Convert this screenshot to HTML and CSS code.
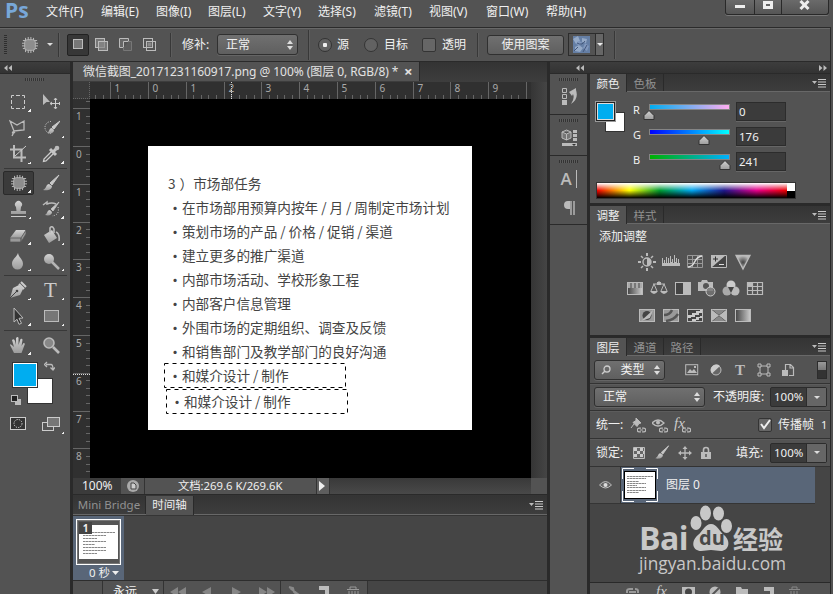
FILE: index.html
```html
<!DOCTYPE html>
<html lang="zh-CN">
<head>
<meta charset="utf-8">
<title>Photoshop</title>
<link rel="stylesheet" href="styles.css">
</head>
<body>
<svg width="0" height="0" class="defs"><defs>
<linearGradient id="g" x1="0" y1="0" x2="0" y2="1"><stop offset="0" stop-color="#d4d4d4"/><stop offset="1" stop-color="#9c9c9c"/></linearGradient>
<linearGradient id="h"><stop offset="0" stop-color="#444"/><stop offset="1" stop-color="#ccc"/></linearGradient>
<radialGradient id="r"><stop offset="0" stop-color="#444"/><stop offset="1" stop-color="#bbb"/></radialGradient>
<symbol id="patch" viewBox="0 0 18 18"><path d="M4 1v16M7 0v18M10 0v18M13 1v16M1 4h16M0 7h18M0 10h18M1 13h16" stroke="#c8c8c8" fill="none"/><rect x="3" y="3" width="12" height="12" rx="3" fill="#8d8d8d" stroke="#b8b8b8"/></symbol>
<symbol id="brush" viewBox="0 0 18 18"><path d="M17 1L8 9l2 2z" fill="#c8c8c8" stroke="#c8c8c8"/><path d="M7 10c-3 0-2 4-6 6 4 1 9 0 9-4z" fill="url(#g)"/></symbol>
<symbol id="menu" viewBox="0 0 15 9"><path d="M0 2h5L2.500 5z" fill="#bbb"/><path d="M6 .5h8M6 3h8M6 5.500h8M6 8h8" stroke="#c8c8c8"/></symbol>
<symbol id="ud" viewBox="0 0 6 10"><path d="M0 4l3-4 3 4zM0 6h6l-3 4z" fill="#ddd"/></symbol>
<symbol id="link" viewBox="0 0 8 5"><path d="M3.500.8H2a1.700 1.700 0 000 3.400h1.500M4.500.8H6a1.700 1.700 0 010 3.400H4.500M2.500 2.500h3" fill="none" stroke="#bbb" stroke-width="1.100"/></symbol>
</defs></svg>
<div class="app">
<header class="menubar">
  <div class="logo">Ps</div>
  <nav class="menus"><span>文件(F)</span><span>编辑(E)</span><span>图像(I)</span><span>图层(L)</span><span>文字(Y)</span><span>选择(S)</span><span>滤镜(T)</span><span>视图(V)</span><span>窗口(W)</span><span>帮助(H)</span></nav>
  <div class="winbtns">
    <i><svg width="12" height="14"><path d="M1 6.500h10" stroke="#eee" stroke-width="3"/></svg></i>
    <i><svg width="12" height="14"><path d="M2.500 2.500h7v5h-7z" stroke="#eee" stroke-width="3" fill="none"/></svg></i>
    <i><svg width="12" height="14"><path d="M1.500 1l8 8M9.500 1l-8 8" stroke="#eee" stroke-width="3"/></svg></i>
  </div>
</header>
<div class="options">
  <i class="vgrip"></i>
  <svg class="o-patch" width="18" height="18"><use href="#patch" x="1" y="1" width="16" height="16"/></svg>
  <svg class="o-arr" width="6" height="3"><path d="M0 0h6L3 3z" fill="#ddd"/></svg>
  <i class="sep"></i>
  <div class="modes">
    <i class="on"><svg width="14" height="14"><rect x="2.500" y="1.500" width="9" height="9" fill="#777" stroke="#bbb"/></svg></i>
    <i><svg width="14" height="14"><rect x=".5" y=".5" width="9" height="9" fill="#777" stroke="#bbb"/><rect x="3.500" y="3.500" width="9" height="9" fill="#888" fill-opacity=".7" stroke="#bbb"/></svg></i>
    <i><svg width="14" height="14"><path d="M4.500 9.500H.5v-9h9v3h-5z" fill="#666" stroke="#bbb"/><path d="M9.500 3.500h3v9h-8v-3" fill="#5c5c5c" stroke="#777"/></svg></i>
    <i><svg width="14" height="14"><rect x="4.500" y="4.500" width="4" height="4" fill="#888"/><rect x=".5" y=".5" width="9" height="9" fill="none" stroke="#bbb"/><rect x="3.500" y="3.500" width="9" height="9" fill="none" stroke="#bbb"/></svg></i>
  </div>
  <i class="sep s2"></i>
  <span class="lab o-fix">修补:</span>
  <div class="select o-sel"><span>正常</span><svg width="6" height="10"><use href="#ud"/></svg></div>
  <i class="sep s3"></i>
  <i class="radio on"></i><span class="lab l1">源</span>
  <i class="radio"></i><span class="lab l2">目标</span>
  <i class="check"></i><span class="lab l3">透明</span>
  <i class="sep s4"></i>
  <div class="button">使用图案</div>
  <div class="pattern"><svg width="17" height="17"><rect width="17" height="17" fill="#657fa5"/><path d="M0 3l5-3 2 5-4 3zM9 2l5 1-1 4-4-1zM2 11l4-2 4 3-3 4-5-1z" fill="#94a9c6"/><path d="M5 5l4 1-2 4-4-2zM12 7l4 3-2 5-4-3z" fill="#8198bd"/><path d="M4 7q5 3 8-2M1 15l4-4M10 16l4-7" stroke="#43577a" fill="none"/></svg><b><svg width="6" height="3"><path d="M0 0h6L3 3z" fill="#eee"/></svg></b></div>
  <i class="sep s5"></i>
</div>
<main class="work">
  <aside class="tools">
    <div class="darkbar"><svg width="8" height="6"><path d="M3.500 0v6L0 3zM8 0v6L4.500 3z" fill="#bbb"/></svg></div>
    <i class="grip"></i>
    <div class="toolgrid">
      <i class="t c"><svg width="18" height="18"><path d="M2.500 5V2.500H5M7 2.500h4M13 2.500h2.500V5M15.500 7v4M15.500 13v2.500H13M11 15.500H7M5 15.500H2.500V13M2.500 11V7" stroke="#ccc" fill="none"/></svg></i>
      <i class="t"><svg width="18" height="18"><path d="M1 1l7 8H4.500L1 12z" fill="#bbb"/><path d="M13.500 5.500v10M8.500 10.500h10M12 7l1.500-2L15 7M12 14l1.500 2 1.500-2M10 9l-2 1.500 2 1.500M17 9l1.500 1.500L17 12" fill="none" stroke="#ccc"/></svg></i>
      <i class="t c"><svg width="18" height="18"><path d="M1 2l7 4 7-4v9L5 12zM5 12c-3 2-1 3 1 1M5 13l-2 4" fill="none" stroke="#bbb" stroke-width="1.300"/></svg></i>
      <i class="t c"><svg width="18" height="18"><path d="M9 2.500a6 6 0 100 12" fill="none" stroke="#ddd" stroke-dasharray="1 1.500"/><path d="M18 2l-8 6 2 2z" fill="#ccc" stroke="#ccc"/><path d="M10 9c-3 0-2 3-5 5 4 1 7 0 7-3z" fill="url(#g)"/></svg></i>
      <i class="t c"><svg width="18" height="18"><path d="M5 0v12.500h12M1 4.500h11.500V17" fill="none" stroke="#bbb" stroke-width="2"/><path d="M6 11L17 1" stroke="#ccc"/></svg></i>
      <i class="t c"><svg width="18" height="18"><path d="M10 6L2 14l-.5 2.500L4 16l8-8" fill="none" stroke="#ccc" stroke-width="1.300"/><path d="M8 4l6 6M11 7l4-4" stroke="#c4c4c4" stroke-width="3"/><circle cx="15" cy="3" r="2.300" fill="#bbb"/></svg></i>
      <hr>
      <i class="t c on"><svg width="18" height="18"><use href="#patch" x="1" y="1" width="16" height="16"/></svg></i>
      <i class="t c"><svg width="18" height="18"><use href="#brush"/></svg></i>
      <i class="t c"><svg width="18" height="18"><path d="M7 7a3.500 3.500 0 115 0l-.5 4H17v3H2v-3h5.500z" fill="url(#g)"/><path d="M2 16.500h15" stroke="#ccc"/></svg></i>
      <i class="t c"><svg width="18" height="18"><path d="M1 5l4-3v2c5-2 7-1 9 0" fill="none" stroke="#bbb" stroke-width="1.500"/><path d="M17 2l-8 7 2 2z" fill="#ccc" stroke="#bbb"/><path d="M8 10c-3 0-2 3-5 5 4 1 7 0 7-3z" fill="url(#g)"/><path d="M16 7q2 8-6 9" fill="none" stroke="#ddd" stroke-dasharray="1 1.500"/></svg></i>
      <i class="t c"><svg width="18" height="18"><path d="M1 12l6-8h10l-5 8z" fill="url(#g)"/><path d="M1 12h11v4H1zM12 12l5-8v4l-5 8z" fill="#999" stroke="#555" stroke-width=".7"/></svg></i>
      <i class="t c"><svg width="18" height="18"><path d="M2 9l8-5 5 8-8 5z" fill="url(#g)"/><path d="M8 7V2q2-3 4 1v4M14 6q4 2 3 9" fill="none" stroke="#bbb" stroke-width="1.600"/></svg></i>
      <i class="t c"><svg width="18" height="18"><path d="M9 1c1 5 5 6 5 11a5 5 0 01-11 0c0-5 4-6 6-11z" fill="url(#g)"/></svg></i>
      <i class="t c"><svg width="18" height="18"><circle cx="7" cy="7" r="5" fill="url(#g)"/><path d="M10 10l7 7" stroke="#b4b4b4" stroke-width="2.500"/></svg></i>
      <hr>
      <i class="t c"><svg width="18" height="18"><path d="M1 17L4 7l6-3 4 4-3 6z" fill="url(#g)"/><path d="M10 3l5 5M12 1l5 5" stroke="#ccc" stroke-width="2"/><path d="M1 17l6-6" stroke="#444"/><circle cx="8" cy="10" r="1.300" fill="#444"/></svg></i>
      <i class="t c serif">T</i>
      <i class="t c"><svg width="18" height="18"><path d="M5 1l9 10-4 .3 2.500 5-2.500 1-2-5L5 15z" fill="#333" stroke="#bbb"/></svg></i>
      <i class="t c"><svg width="18" height="18"><rect x="2.500" y="3.500" width="14" height="11" fill="#777" stroke="#bbb"/></svg></i>
      <hr>
      <i class="t c"><svg width="18" height="18"><path d="M5 17L1 9q0-2 4 2L3 4q2-2 3 1l1 4V2q2-2 2.500 0v7l2-6q2-1 2 1l-1 6 2-3q2 0 1 2l-3 8z" fill="url(#g)"/></svg></i>
      <i class="t"><svg width="18" height="18"><circle cx="7" cy="7" r="5" fill="#888" stroke="#bbb" stroke-width="1.600"/><path d="M11 11l6 6" stroke="#bbb" stroke-width="2.600"/></svg></i>
    </div>
    <div class="swatches">
      <i class="bg"></i><i class="fg"></i>
      <svg class="swap" width="11" height="10"><path d="M2 3.500h5q2 0 2 5M3 1L.5 3.500 3 6M6.500 6.500L9 9l2-2.500" fill="none" stroke="#bbb" stroke-width="1.300"/></svg>
      <svg class="reset" width="11" height="11"><rect x="4" y="4" width="6" height="6" fill="#bbb"/><rect x=".5" y=".5" width="6" height="6" fill="#222" stroke="#bbb"/></svg>
    </div>
    <div class="toolgrid last">
      <i class="t"><svg width="18" height="18"><rect x="1.500" y="2.500" width="15" height="12" fill="#333" stroke="#ccc"/><circle cx="9" cy="8.500" r="4" fill="none" stroke="#ddd" stroke-dasharray="1.200 1.200"/></svg></i>
      <i class="t c"><svg width="18" height="18"><rect x=".5" y="7.500" width="11" height="8" fill="#555" stroke="#ccc"/><rect x="5.500" y="2.500" width="12" height="9" fill="#777" stroke="#ccc"/></svg></i>
    </div>
  </aside>
  <section class="doc">
    <div class="doctabs"><div class="doctab"><span>微信截图_20171231160917.png @ 100% (图层 0, RGB/8) *</span><b>×</b></div></div>
    <div class="ruler-row"><i class="corner"></i><svg id="rulerX" width="441" height="17"></svg><i class="vs"></i></div>
    <div class="stage">
      <svg id="rulerY" width="17" height="379"></svg>
      <div class="canvas">
        <article class="paper">
          <p class="first">3<em></em>）市场部任务</p>
          <p><b>·</b>在市场部用预算内按年 / 月 / 周制定市场计划</p>
          <p><b>·</b>策划市场的产品 / 价格 / 促销 / 渠道</p>
          <p><b>·</b>建立更多的推广渠道</p>
          <p><b>·</b>内部市场活动、学校形象工程</p>
          <p><b>·</b>内部客户信息管理</p>
          <p><b>·</b>外围市场的定期组织、调查及反馈</p>
          <p><b>·</b>和销售部门及教学部门的良好沟通</p>
          <p><b>·</b>和媒介设计 / 制作</p>
          <p class="copy"><b>·</b>和媒介设计 / 制作</p>
          <svg class="ants" width="324" height="284"><path d="M16.500 217.500h181v24h-181zM18.500 243.500h181v24h-181z" fill="none" stroke="#000" stroke-dasharray="4 4"/></svg>
        </article>
      </div>
      <i class="vs"></i>
    </div>
    <div class="status"><span class="zoomv">100%</span><i class="sicon"><svg width="12" height="12"><circle cx="6" cy="6" r="6" fill="#aaa"/><path d="M4 3h3l2 2v4H4z" fill="#ccc" stroke="#444"/></svg></i><span class="size">文档:269.6 K/269.6K</span><i class="play"><svg width="6" height="10"><path d="M0 0v10l6-5z" fill="#eee"/></svg></i><i class="hs"></i><i class="hc"></i></div>
    <div class="tabs tl"><span class="tab off">Mini Bridge</span><span class="tab on">时间轴</span><svg width="15" height="9"><use href="#menu"/></svg></div>
    <div class="timeline"><div class="frame"><div class="fthumb"><b>1</b><div class="page"><i></i><i></i><i></i><i></i><i></i><i></i><i></i><i></i></div></div><div class="ftime">0 秒<svg width="7" height="4"><path d="M0 0h7L3.500 4z" fill="#eee"/></svg></div></div></div>
    <div class="tlfoot"><i class="blank"></i><div class="loop"><span>永远</span><svg width="7" height="5"><path d="M0 0h7L3.500 5z" fill="#ccc"/></svg></div>
      <div class="ctl"><svg width="116" height="14"><path d="M14 6v10l-8-5zM22 6v10l-8-5zM47 6v10l-9-5zM68 6v10l9-5zM95 6v10l8-5zM103 6v10l8-5z" fill="#858585"/></svg></div>
      <div class="ctl2"><svg width="86" height="14"><path d="M8 6l4 1 1 4 6 5M9 7l9 7" stroke="#888" stroke-width="2" fill="none"/><path d="M38 5h10v9h-4v-5h-6z" fill="#bbb"/><path d="M66 8.500h12M69 8V6h6v2M68 10v5M71 10v5M74 10v5M77 10v5" fill="none" stroke="#999"/></svg></div></div>
  </section>
  <section class="right">
    <div class="darkbar two"><svg width="8" height="6"><path d="M3.500 0v6L0 3zM8 0v6L4.500 3z" fill="#bbb"/></svg><svg width="8" height="6"><path d="M0 0v6l3.500-3zM4.500 0v6L8 3z" fill="#bbb"/></svg></div>
    <div class="rbody">
      <div class="strip">
        <div class="sg"><i class="grip"></i><svg width="16" height="20"><path d="M1.500 1.500h4v4h-4zM1.500 7.500h4v4h-4z" fill="none" stroke="#bbb"/><path d="M1 13h5v5H1z" fill="#bbb"/><path d="M8 5l7-4v2q3 9-5 14 4-6 2-10l-1 2z" fill="#bbb"/></svg></div>
        <div class="sg"><i class="grip"></i><svg width="16" height="20"><path d="M1 4l4.500-2L10 4v6l-4.500 2L1 10zM1 4l4.500 2L10 4M5.500 6v6" fill="#777" stroke="#bbb"/><path d="M12 2h4v3h-4zM12 6h4v3h-4zM12 10h4v3h-4zM1 15h15v3H1z" fill="#bbb"/><path d="M11 16h4l-2 2z" fill="#333"/></svg></div>
        <div class="sg tall"><i class="grip"></i><div class="ach">A</div><svg width="12" height="16"><path d="M11 1H5a4 4 0 000 8h2V1" fill="#bbb"/><path d="M8 1v14M11 1v14" stroke="#bbb" stroke-width="1.400"/></svg></div>
      </div>
      <div class="panels">
        <div class="panel color">
          <div class="tabs"><span class="tab on">颜色</span><span class="tab">色板</span><svg width="15" height="9"><use href="#menu"/></svg></div>
          <div class="cbody">
            <div class="sw"><i class="b"></i><i class="f"></i></div>
            <div class="sliders">
              <div><span>R</span><i class="tr r"></i><svg class="th p0" width="12" height="10"><path d="M6 .5l5 5v4H1v-4z" fill="url(#g)" stroke="#333"/></svg><b>0</b></div>
              <div><span>G</span><i class="tr g"></i><svg class="th p1" width="12" height="10"><path d="M6 .5l5 5v4H1v-4z" fill="url(#g)" stroke="#333"/></svg><b>176</b></div>
              <div><span>B</span><i class="tr bl"></i><svg class="th p2" width="12" height="10"><path d="M6 .5l5 5v4H1v-4z" fill="url(#g)" stroke="#333"/></svg><b>241</b></div>
            </div>
            <div class="spectrum"><i></i><b></b></div>
          </div>
        </div>
        <div class="panel adj">
          <div class="tabs"><span class="tab on">调整</span><span class="tab">样式</span><svg width="15" height="9"><use href="#menu"/></svg></div>
          <p>添加调整</p>
          <div class="arow">
            <svg viewBox="0 0 18 18"><circle cx="9" cy="9" r="4" fill="#555" stroke="#bbb" stroke-width="1.400"/><path d="M9 5a4 4 0 010 8zM8 0h2v3H8zM8 15h2v3H8zM0 8h3v2H0zM15 8h3v2h-3z" fill="#bbb"/><path d="M3 3l2 2M15 3l-2 2M3 15l2-2M15 15l-2-2" stroke="#bbb" stroke-width="1.500"/></svg>
            <svg viewBox="0 0 18 18"><path d="M0 13V5h1v5h1V7h1v3h1V4h1v6h1V5h1v5h1V3h1v6h1V6h1v4h1V2h1v7h1V5h1v5h1V6h1v4h1V5h0v8z" fill="#bbb"/></svg>
            <svg viewBox="0 0 18 18"><path d="M1.500 2.500h15v12h-15zM6.500 2v12M11.500 2v12M1 6.500h15M1 10.500h15" stroke="#999" fill="none"/><path d="M2 14c8 0 5-10 14-11" stroke="#ddd" fill="none" stroke-width="1.500"/></svg>
            <svg viewBox="0 0 18 18"><path d="M1.500 2.500h15v12h-15z" fill="#444" stroke="#bbb"/><path d="M1 15V2h15z" fill="#bbb"/><path d="M3 6h5M5.500 3.500v5" stroke="#333"/><path d="M9 11.500h5" stroke="#ddd"/></svg>
            <svg viewBox="0 0 18 18"><path d="M2 2.500h14L9 16z" fill="url(#r)" stroke="#bbb" stroke-width="1.300"/></svg>
          </div>
          <div class="arow">
            <svg viewBox="0 0 18 18"><rect x="1.500" y="2.500" width="15" height="12" fill="url(#h)" stroke="#bbb"/><path d="M2 3h14v5H2z" fill="#aaa"/><path d="M5 3v5M9 3v5M13 3v5" stroke="#777" stroke-width="2"/></svg>
            <svg viewBox="0 0 18 18"><path d="M3 4h12M9 1v4M4 4l-3 7M4 4l3 7M14 4l-3 7M14 4l3 7" stroke="#bbb" fill="none"/><path d="M0 11h8q-4 6-8 0zM10 11h8q-4 6-8 0zM7 2h4v3H7z" fill="#bbb"/></svg>
            <svg viewBox="0 0 18 18"><rect x="1.500" y="2.500" width="15" height="12" fill="#444" stroke="#bbb"/><path d="M9 2h8v13H9z" fill="#bbb"/></svg>
            <svg viewBox="0 0 18 18"><path d="M0 2h3l1-2h5l1 2h5v9H0z" fill="#bbb"/><circle cx="8" cy="6" r="3" fill="#555"/><circle cx="12.500" cy="11.500" r="4.500" fill="#777" fill-opacity=".8" stroke="#ccc"/></svg>
            <svg viewBox="0 0 18 18"><circle cx="9" cy="5" r="4.500" fill="#ccc"/><circle cx="5" cy="11" r="4.500" fill="#aaa"/><circle cx="13" cy="11" r="4.500" fill="#bbb"/><path d="M6 7l6 0-3 6z" fill="#444"/></svg>
            <svg viewBox="0 0 18 18"><path d="M1.500 2.500h15v12h-15zM6.500 2v13M11.500 2v13M1 6.500h15M1 10.500h15" stroke="#bbb" fill="#555" stroke-width="1.200"/><path d="M2 3h4v3H2z" fill="#bbb"/></svg>
          </div>
          <div class="arow">
            <svg viewBox="0 0 18 18"><rect x="1.500" y="2.500" width="15" height="12" fill="#999" stroke="#bbb"/><circle cx="9" cy="8.500" r="4.500" fill="#444"/><path d="M3 14L15 3l-3 8z" fill="#bbb"/></svg>
            <svg viewBox="0 0 18 18"><rect x="1.500" y="2.500" width="15" height="12" fill="#999" stroke="#bbb"/><path d="M2 8q6 0 8-5M4 14q8-1 12-7" stroke="#555" stroke-width="2.500" fill="none"/></svg>
            <svg viewBox="0 0 18 18"><rect x="1.500" y="2.500" width="15" height="12" fill="#444" stroke="#bbb"/><path d="M2 8h4V6h4V4h4V3h2v3h-3v2H9v2H5v1H2zM6 14v-2h4v-2h4V9h2v2h-3v2h-3v1z" fill="#ccc"/></svg>
            <svg viewBox="0 0 18 18"><rect x="1.500" y="2.500" width="15" height="12" fill="#666" stroke="#bbb"/><path d="M2 3l7 5.500L16 3M2 14l7-5.500 7 5.500" fill="#888" stroke="#444"/><path d="M2 3l7 5.500L2 14zM16 3L9 8.500l7 5.500z" fill="#bbb"/></svg>
            <svg viewBox="0 0 18 18"><rect x="1.500" y="2.500" width="15" height="12" fill="url(#h)" stroke="#bbb"/></svg>
          </div>
        </div>
        <div class="panel layers">
          <div class="tabs"><span class="tab on">图层</span><span class="tab">通道</span><span class="tab">路径</span><svg width="15" height="9"><use href="#menu"/></svg></div>
          <div class="lrow r1">
            <div class="select kind"><svg width="10" height="10"><circle cx="6" cy="4" r="3" fill="none" stroke="#ccc" stroke-width="1.300"/><path d="M4 6L1 9" stroke="#ccc" stroke-width="1.500"/></svg><span>类型</span><svg width="6" height="10"><use href="#ud"/></svg></div>
            <div class="filters">
              <svg viewBox="0 0 14 14"><rect x=".7" y="1.700" width="12" height="10" fill="#555" stroke="#bbb"/><path d="M2 10l3-4 2 2 2-2 3 4zM9 3h2v2H9z" fill="#bbb"/></svg>
              <svg viewBox="0 0 14 14"><circle cx="7" cy="7" r="5" fill="#666" stroke="#bbb"/><path d="M11 3A5.500 5.500 0 003 10.500z" fill="#ccc"/></svg>
              <em>T</em>
              <svg viewBox="0 0 14 14"><path d="M3 3h8v8H3z" fill="none" stroke="#bbb"/><path d="M1 1h3v3H1zM10 1h3v3h-3zM1 10h3v3H1zM10 10h3v3h-3z" fill="#555" stroke="#bbb"/></svg>
              <svg viewBox="0 0 14 14"><path d="M4.500 7V1.500h5l3 3v8H8M9 1v4h4" fill="none" stroke="#bbb" stroke-width="1.200"/><path d="M1 7h6v6H1z" fill="#bbb"/></svg>
            </div>
            <i class="switch"></i>
          </div>
          <div class="lrow r2"><div class="select blend"><span>正常</span><svg width="6" height="10"><use href="#ud"/></svg></div><span class="pl">不透明度:</span><div class="num"><span>100%</span><b><svg width="6" height="3"><path d="M0 0h6L3 3z" fill="#ddd"/></svg></b></div></div>
          <div class="lrow r3"><span class="rl">统一:</span>
            <svg width="17" height="16"><path d="M6 1l5 5-2 .5-2 3-4-4 3-2zM4 7l-3 4" fill="#bbb" stroke="#bbb"/><use href="#link" x="7" y="10" width="9" height="6"/></svg>
            <svg width="17" height="16"><path d="M0 6q6-6 12 0-6 6-12 0z" fill="none" stroke="#bbb" stroke-width="1.300"/><circle cx="6" cy="5.500" r="2" fill="#bbb"/><use href="#link" x="7" y="10" width="9" height="6"/></svg>
            <svg width="17" height="16"><text x="0" y="11" class="fx">fx</text><use href="#link" x="8" y="10" width="9" height="6"/></svg>
            <i class="check on"><svg width="13" height="12"><path d="M2 5l3 4 6-8" fill="none" stroke="#eee" stroke-width="2"/></svg></i><span class="prop">传播帧</span><span class="one">1</span></div>
          <div class="lrow r4"><span class="rl">锁定:</span>
            <svg width="14" height="14"><path d="M1.500 1.500h11v11h-11z" fill="#666" stroke="#bbb"/><path d="M2 2h3v3H2zM8 2h3v3H8zM5 5h3v3H5zM11 5h1v3h-1zM2 8h3v3H2zM8 8h3v3H8z" fill="#ccc"/></svg>
            <svg width="16" height="15"><use href="#brush"/></svg>
            <svg width="14" height="14"><path d="M7 2v10M2 7h10" stroke="#bbb" stroke-width="1.300"/><path d="M7 0l2.500 3h-5zM7 14l2.500-3h-5zM0 7l3-2.500v5zM14 7l-3-2.500v5z" fill="#bbb"/></svg>
            <svg width="12" height="14"><path d="M3.500 7V4a2.500 2.500 0 015 0v3" fill="none" stroke="#bbb" stroke-width="1.600"/><path d="M1 6h10v7H1z" fill="#bbb"/><path d="M6 8v3" stroke="#555" stroke-width="1.500"/></svg>
            <span class="pl">填充:</span><div class="num"><span>100%</span><b><svg width="6" height="3"><path d="M0 0h6L3 3z" fill="#ddd"/></svg></b></div></div>
          <div class="list">
            <div class="layer"><i class="eye"><svg width="13" height="10"><path d="M.5 5q6-7 12 0-6 6-12 0z" fill="#666" stroke="#bbb"/><circle cx="6.500" cy="5" r="2" fill="#ddd"/></svg></i>
              <div class="lmain"><div class="lthumb"><div class="page"><i></i><i></i><i></i><i></i><i></i><i></i><i></i><i></i></div><svg width="36" height="34"><path d="M.5 11V.5H12M24 .5h11.500V11M35.500 23v10.500H24M12 33.500H.5V23" fill="none" stroke="#fff"/></svg></div><span>图层 0</span></div></div>
            <div class="mark"><div class="mline"><span class="bai">Bai</span><div class="paw"><svg width="44" height="48"><g fill="#c8c8c8"><ellipse cx="7" cy="18" rx="5.500" ry="7"/><ellipse cx="16.500" cy="8" rx="5.500" ry="7.500"/><ellipse cx="29.500" cy="8.500" rx="5.500" ry="7"/><ellipse cx="37.500" cy="21" rx="5.500" ry="7"/><path d="M22 19c6 0 8 7 13 11 8 7 4 16-3 16-4 0-6-1-10-1s-6 1-10 1c-8 0-11-9-3-16 5-4 7-11 13-11z"/></g></svg><b>du</b></div><span class="jy">经验</span></div><div class="url">jingyan.baidu.com</div></div>
          </div>
          <div class="lfoot"><svg width="180" height="11"><g fill="none" stroke="#999" stroke-width="2"><path d="M7 10V8q0-2 3-2h3M18 10V8q0-2-3-2M9 9h7"/></g><text x="36" y="13" class="fx">fx</text><path d="M62 4h13v7H62z" fill="#bbb"/><circle cx="68.500" cy="9" r="3.500" fill="#444"/><circle cx="95" cy="9" r="5.500" fill="#bbb"/><path d="M99 5l-7 7" stroke="#555" stroke-width="2"/><path d="M116 4h5l1 2h6v5h-12z" fill="#bbb"/><path d="M144 4h10v7h-4V8h-6z" fill="#bbb"/><path d="M169 6.500h11M172 6V4h5v2M171 8v4M174 8v4M177 8v4" stroke="#888" fill="none"/></svg></div>
        </div>
      </div>
    </div>
  </section>
</main>
</div>
<script src="rulers.js"></script>
</body>
</html>
```
FILE: styles.css
```css
* { box-sizing: border-box; }
body { margin: 0; overflow: hidden; background: #535353; font: 12px/16px "Noto Sans", "Noto Sans CJK SC", sans-serif; color: #f0f0f0; }
i, em, b { font-style: normal; }
svg { display: block; flex: none; }
span, p { white-space: nowrap; }
.defs { position: absolute; }
.app { width: 833px; height: 594px; display: flex; flex-direction: column; overflow: hidden; }
.menubar { height: 27px; display: flex; flex: none; }
.logo { width: 46px; padding-left: 5px; font: bold 21px/21px "Open Sans", sans-serif; color: #78a7d8; }
.menus { display: grid; grid-template-columns: 55px 55px 52px 55px 55px 56px 55px 57px 60px 60px; line-height: 24px; width: 679px; flex: none; }
.winbtns { width: 104px; height: 15px; display: grid; grid-template-columns: 28px 27px 1fr; border: 1px solid #292929; border-top: 0; border-radius: 0 0 3px 3px; background: linear-gradient(#6a6a6a, #555); box-shadow: 0 1px #777; }
.winbtns i { display: flex; justify-content: center; border-left: 1px solid #292929; }
.winbtns i:first-child { border: 0; }
.options { height: 34px; flex: none; width: 831px; display: flex; align-items: center; border-top: 1px solid #2b2b2b; border-right: 1px solid #2b2b2b; box-shadow: inset 0 1px #686868; }
.vgrip { width: 3px; height: 20px; margin: 0 14px 0 4px; background: repeating-linear-gradient(#2e2e2e 0 1px, #555 1px 2px); }
.o-arr { margin: 0 5px 0 8px; }
.sep { width: 2px; height: 24px; margin-right: 7px; border-left: 1px solid #383838; border-right: 1px solid #5d5d5d; }
.modes { display: flex; width: 96px; }
.modes i { width: 24px; height: 22px; display: flex; align-items: center; justify-content: center; flex: none; }
.modes .on { width: 22px; margin-right: 1px; background: #373737; border: 1px solid #222; border-radius: 2px; }
.s2 { margin: 0 10px 0 7px; }
.lab { flex: none; }
.o-fix { width: 35px; }
.select { display: flex; align-items: center; justify-content: space-between; border: 1px solid #303030; border-radius: 3px; background: linear-gradient(#707070, #5f5f5f); box-shadow: 0 1px #656565; flex: none; }
.o-sel { width: 81px; height: 21px; padding: 0 4px 0 8px; }
.s3 { height: 30px; margin: 0 8px 0 10px; }
.radio { width: 14px; height: 14px; border-radius: 50%; border: 1px solid #343434; background: #626262; flex: none; }
.radio.on { background: radial-gradient(#eee 0 2px, #626262 2.500px); }
.l1 { width: 27px; padding-left: 5px; }
.l1 + .radio { margin-left: 5px; }
.l2 { width: 37px; padding-left: 6px; margin-right: 1px; }
.check { width: 14px; height: 14px; border: 1px solid #343434; border-radius: 2px; background: #666; flex: none; }
.l2 + .check { margin-left: 6px; }
.l3 { width: 36px; padding-left: 6px; margin-right: 5px; }
.s4 { margin-right: 8px; }
.button { width: 77px; height: 20px; line-height: 18px; text-align: center; border: 1px solid #303030; border-radius: 3px; background: linear-gradient(#707070, #5f5f5f); flex: none; }
.pattern { width: 36px; height: 23px; margin: 0 10px 0 4px; display: flex; align-items: center; border: 1px solid #2c2c2c; padding-left: 4px; flex: none; }
.pattern b { width: 9px; height: 21px; margin-left: 5px; border-left: 1px solid #2c2c2c; background: #666; display: flex; align-items: center; justify-content: center; }
.s5 { height: 28px; }
.work { flex: 1; display: flex; min-height: 0; background: linear-gradient(90deg, #2a2a2a 831px, #535353 831px); padding-top: 1px; }
.darkbar { height: 12px; background: linear-gradient(#3d3d3d, #333); border-bottom: 1px solid #2a2a2a; display: flex; align-items: center; padding-left: 4px; }
.grip { display: block; height: 3px; width: 19px; background: repeating-linear-gradient(90deg, #333 0 1px, #5c5c5c 1px 2px); }
.tools { width: 70px; background: #535353; flex: none; }
.tools > .grip { margin: 4px 0 8px 25px; }
.toolgrid { display: grid; grid-template-columns: 33px 33px; padding-left: 1px; grid-template-rows: repeat(3, 26px) 3px repeat(4, 26px) 3px repeat(2, 26px) 3px 26px; }
.toolgrid hr { grid-column: 1 / 3; height: 1px; border: 0; background: #383838; margin: 1px 0 1px 3px; }
.toolgrid.last { grid-template-rows: 26px; }
.t { display: flex; align-items: center; justify-content: center; }
.t.c { background: linear-gradient(135deg, transparent 50%, #eee 50%) 27px 20px / 3px 3px no-repeat; }
.t.on { margin: 1px 0 0 2px; background-color: #3b3b3b; background-position: 24px 18px; border: 1px solid #2a2a2a; border-radius: 2px; width: 31px; height: 24px; }
.serif { font: 21px/20px "Liberation Serif", serif; color: #ccc; }
.swatches { position: relative; height: 52px; margin-top: 1px; }
.swatches > * { position: absolute; }
.swatches .fg { left: 12px; top: 3px; width: 26px; height: 26px; background: #00adf0; border: 1px solid #333; box-shadow: inset 0 0 0 1px #fff; }
.swatches .bg { left: 27px; top: 19px; width: 26px; height: 26px; background: #fff; border: 1px solid #333; }
.swap { left: 44px; top: 2px; }
.reset { left: 11px; top: 36px; }
.doc { width: 474px; margin-left: 3px; flex: none; display: flex; flex-direction: column; background: #353535; overflow: hidden; }
.doctabs { height: 20px; flex: none; background: linear-gradient(#333, #3d3d3d); }
.doctab { width: 347px; height: 19px; background: #535353; border-right: 1px solid #2a2a2a; padding-left: 10px; display: flex; line-height: 20px; font-size: 12px; color: #e2e2e2; }
.doctab span { width: 317px; letter-spacing: -.06px; }
.doctab b { font-size: 15px; margin-left: 4px; line-height: 18px; }
.ruler-row { display: flex; height: 17px; flex: none; }
.corner { width: 17px; background: #3a3a3a; border-right: 1px dotted #666; border-bottom: 1px dotted #666; }
.ruler-row svg, .stage > svg { background: #303030; }
.vs { width: 16px; background: linear-gradient(90deg, #353535, #454545); flex: none; }
.stage { display: flex; height: 379px; flex: none; }
.canvas { width: 441px; background: #000; padding: 47px 58px; }
.paper { position: relative; width: 324px; height: 284px; background: #fff; padding: 25px 0 0 20px; color: #444; font: 13.640px/24px "Noto Sans CJK SC", sans-serif; word-spacing: -.1px; }
.paper p { margin: 0; height: 24px; display: flex; }
.paper p b { width: 14px; text-align: center; flex: none; font-weight: 500; }
.paper .first em { width: 4px; }
.paper .copy { margin: 2px 0 0 2px; }
.ants { position: absolute; left: 0; top: 0; }
.status { height: 17px; flex: none; display: flex; background: #353535; border-bottom: 1px solid #2a2a2a; line-height: 15px; }
.zoomv { width: 48px; padding-left: 9px; background: #3b3b3b; }
.sicon { width: 24px; background: #535353; display: flex; align-items: center; justify-content: center; border-right: 1px solid #333; }
.size { width: 171px; background: #535353; padding-left: 33px; font-size: 11.300px; }
.play { width: 14px; background: #5e5e5e; border: 1px solid #333; border-width: 0 1px; padding: 3px 0 0 2px; }
.hs { flex: 1; background: linear-gradient(#393939, #494949); }
.hc { width: 16px; background: #535353; }
.tabs { height: 19px; flex: none; display: flex; background: linear-gradient(#343434, #3d3d3d); border-bottom: 1px solid #686868; }
.tab { width: 37px; text-align: center; line-height: 19px; font-size: 11.500px; border-right: 1px solid #2a2a2a; color: #919191; }
.tab.on { background: #535353; color: #eee; margin-bottom: -1px; }
.panels .tabs { height: 18px; }
.tabs svg { margin: 5px 3px 0 auto; }
.tl { margin-top: 1px; }
.tl .tab { line-height: 18px; }
.tl .off { width: 73px; }
.tl .on { width: 48px; }
.timeline { height: 65px; flex: none; margin-top: 1px; background: #454545; border-bottom: 1px solid #2d2d2d; }
.frame { width: 51px; height: 64px; background: #596678; padding: 3px; }
.fthumb { width: 45px; height: 46px; border: 1px solid #fff; background: #555; box-shadow: inset 0 0 0 1px #777; padding: 5px 2px 0; position: relative; }
.fthumb b { position: absolute; left: 2px; top: 2px; width: 13px; height: 12px; background: #444; font-size: 10px; line-height: 12px; text-align: center; }
.page { height: 34px; background: #fff; padding: 7px 3px 0 4px; }
.page i { display: block; height: 1px; margin-bottom: 2px; background: repeating-linear-gradient(90deg, #888 0 2px, #bbb 2px 3px); width: 72%; }
.page i:nth-child(1) { width: 100%; } .page i:nth-child(3), .page i:nth-child(8) { width: 45%; } .page i:nth-child(5) { width: 38%; }
.ftime { display: flex; align-items: center; height: 15px; padding-left: 13px; gap: 2px; font-size: 11.500px; }
.tlfoot { height: 14px; display: flex; flex: none; background: #454545; overflow: hidden; }
.tlfoot > * { background: #535353; border-right: 1px solid #333; flex: none; }
.blank { width: 30px; }
.loop { width: 61px; display: flex; padding: 3px 4px 0 10px; justify-content: space-between; }
.loop svg { margin-top: 5px; }
.ctl { width: 117px; } .ctl2 { width: 87px; }
.right { width: 283px; margin-left: 3px; display: flex; flex-direction: column; flex: none; }
.two { justify-content: space-between; padding: 0 3px 0 26px; height: 12px; flex: none; width: 280px; }
.rbody { flex: 1; display: flex; }
.strip { width: 37px; background: #535353; margin-right: 3px; }
.sg { height: 41px; border-bottom: 1px solid #2a2a2a; display: flex; flex-direction: column; align-items: center; }
.sg .grip { margin: 4px 0 6px; flex: none; }
.sg.tall { height: 69px; }
.ach { width: 16px; height: 18px; border-right: 1px solid #bbb; font: 600 17px/18px "Open Sans", sans-serif; color: #bbb; margin: 1px 0 12px; }
.panels { width: 240px; display: flex; flex-direction: column; gap: 3px; }
.panel { background: #535353; flex: none; }
.color { height: 129px; } .adj { height: 129px; } .layers { height: 256px; }
.cbody { display: grid; grid-template-columns: 43px 1fr; }
.sw { position: relative; }
.sw i { position: absolute; width: 20px; height: 20px; border: 1px solid #333; }
.sw .f { left: 5px; top: 9px; width: 21px; height: 21px; background: #00adf0; border-color: #999; box-shadow: inset 0 0 0 1px #222, inset 0 0 0 2px #ddd; }
.sw .b { left: 15px; top: 20px; background: #fff; }
.sliders { padding-top: 8px; }
.sliders > div { position: relative; height: 25px; display: flex; }
.sliders span { width: 16px; line-height: 19px; font-size: 11px; }
.tr { width: 81px; height: 6px; margin-top: 4px; border: 1px solid #858585; }
.tr.r { background: linear-gradient(90deg, #00adf0, #ffadf0); } .tr.g { background: linear-gradient(90deg, #00f, #0ff); } .tr.bl { background: linear-gradient(90deg, #00b000, #00b0ff); }
.th { position: absolute; top: 10px; } .p0 { left: 10px; } .p1 { left: 65px; } .p2 { left: 86px; }
.sliders b { width: 50px; height: 19px; margin: 2px 0 0 6px; padding-left: 2px; background: #3b3b3b; border: 1px solid #2c2c2c; box-shadow: 0 1px #666; font-weight: 400; line-height: 18px; font-size: 11.500px; }
.spectrum { grid-column: 1 / 3; width: 200px; height: 17px; margin: 7px 0 0 6px; display: flex; border: 1px solid #333; }
.spectrum i { width: 190px; background: linear-gradient(#fff, rgba(255,255,255,0) 50%, rgba(0,0,0,0) 50%, #000), linear-gradient(90deg, #e00, #ff0 17%, #009a30 33%, #00a5ee 50%, #20188a 67%, #e4008a 84%, #e00); }
.spectrum b { width: 8px; background: linear-gradient(#fff 50%, #000 50%); }
.adj p { margin: 5px 0 3px 9px; height: 16px; line-height: 16px; }
.arow { display: flex; justify-content: center; gap: 6px; height: 27px; align-items: center; margin-left: -30px; }
.arow svg { width: 18px; height: 18px; }
.layers { display: flex; flex-direction: column; }
.lrow { height: 28px; flex: none; display: flex; align-items: center; border-bottom: 1px solid #333; box-shadow: 0 1px #5c5c5c; padding-left: 4px; }
.lrow.r2 { height: 27px; }
.kind { width: 71px; height: 20px; padding: 0 4px 0 6px; }
.filters { display: flex; gap: 10px; margin-left: 20px; align-items: center; }
.filters svg { width: 14px; height: 14px; }
.filters em { width: 14px; text-align: center; font: bold 15px/14px "Liberation Serif", serif; color: #bbb; }
.switch { width: 10px; height: 18px; margin-left: 22px; border: 1px solid #2c2c2c; background: linear-gradient(#999, #777 8px, #333 8px); }
.blend { width: 111px; height: 20px; padding: 0 4px 0 8px; }
.r2 .pl { width: 57px; margin-left: 8px; }
.num { width: 57px; height: 20px; display: flex; background: #3b3b3b; border: 1px solid #2c2c2c; border-radius: 2px; line-height: 18px; flex: none; }
.num span { width: 35px; padding-left: 3px; font-size: 11.500px; }
.num b { flex: 1; background: #666; border-left: 1px solid #2c2c2c; display: flex; align-items: center; justify-content: center; }
.rl { width: 34px; padding-left: 2px; flex: none; }
.r3 > svg { margin: 0 3px 0 2px; }
.r3 .check { margin-left: 64px; display: flex; }
.prop { margin-left: 6px; width: 43px; } .one { font-size: 11px; }
.fx { font: italic 15px "Liberation Serif", serif; fill: #ccc; }
.r4 > svg { margin: 0 4px 0 4px; }
.r4 .pl { width: 34px; margin-left: auto; }
.r4 .num { margin-right: 3px; }
.list { flex: 1; background: #454545; position: relative; }
.layer { display: flex; height: 37px; border-bottom: 1px solid #353535; width: 225px; }
.eye { width: 31px; background: #535353; border-right: 1px solid #333; display: flex; align-items: center; justify-content: center; }
.lmain { flex: 1; background: #596678; display: flex; align-items: center; }
.lthumb { width: 36px; height: 34px; margin: 0 8px 0 1px; position: relative; padding: 3px 2px; }
.lthumb .page { height: 28px; width: 32px; border: 1px solid #000; padding: 4px 2px 0; }
.lthumb .page i { margin-bottom: 1.300px; }
.lthumb svg { position: absolute; left: 0; top: 0; }
.mark { position: absolute; left: 49px; top: 38px; width: 150px; color: #c8c8c8; }
.mline { display: flex; height: 49px; }
.bai { width: 50px; font: bold 32px/30px "Open Sans", sans-serif; padding-top: 18px; letter-spacing: -.6px; }
.paw { width: 44px; position: relative; }
.paw b { position: absolute; left: 10px; top: 21px; color: #484848; font: bold 20px/24px "Open Sans", sans-serif; }
.jy { font: bold 25px/30px "Noto Sans CJK SC", sans-serif; padding-top: 18px; }
.url { font: 17.300px/22px "Open Sans", sans-serif; margin-top: -1px; }
.lfoot { height: 12px; flex: none; border-top: 1px solid #292929; padding-left: 30px; background: #535353; }
```
FILE: rulers.js
```js
const CM = 37.8;
function ruler(id, length, origin, vertical, cursor) {
  let path = "", labels = "";
  for (let n = -20; n < 60; n++) {
    const p = Math.round(origin + n * CM / 5) + 0.5;
    if (p < 0 || p > length) continue;
    const start = n % 5 === 0 ? 0 : 13;
    path += vertical ? `M${start} ${p}H17` : `M${p} ${start}V17`;
    if (n % 5 === 0 && p + 8 < length) {
      const v = Math.abs(n / 5);
      labels += vertical ? `<text x="3" y="${p + 11}">${v}</text>` : `<text x="${p + 4}" y="10">${v}</text>`;
    }
  }
  const c = vertical ? `M0 ${cursor}H17` : `M${cursor} 0V17`;
  document.getElementById(id).innerHTML =
    `<path d="${path}" stroke="#666"/><path d="${c}" stroke="#ddd" stroke-dasharray="1 1"/><g fill="#a9a9a9" font-size="10">${labels}</g>`;
}
ruler("rulerX", 441, 58, false, 141.5);
ruler("rulerY", 379, 47, true, 275.5);
```
